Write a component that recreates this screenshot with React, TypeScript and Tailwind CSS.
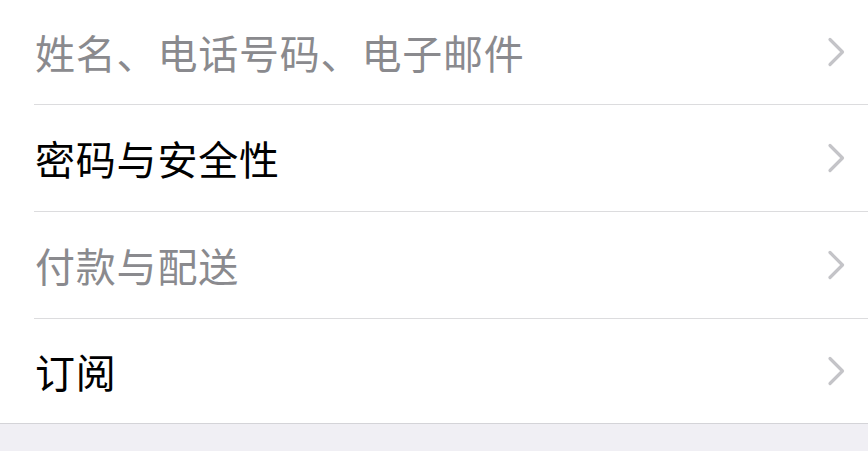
import React from 'react';

type Row = { label: string; muted: boolean };

const rows: Row[] = [
  { label: '姓名、电话号码、电子邮件', muted: true },
  { label: '密码与安全性', muted: false },
  { label: '付款与配送', muted: true },
  { label: '订阅', muted: false },
];

// row heights incl. the 1px divider
const heights = ['h-[105px]', 'h-[107px]', 'h-[107px]', 'h-[104px]'];

const Chevron = () => (
  <svg width="19" height="30" viewBox="0 0 19 30" fill="none" className="shrink-0">
    <path d="M3 2.5 L15.5 15 L3 27.5" stroke="#c4c4c8" strokeWidth="3.2" strokeLinecap="round" strokeLinejoin="round" />
  </svg>
);

const App: React.FC = () => {
  return (
    <div
      className="w-[868px] h-[451px] bg-[#f0eff4] overflow-hidden"
      style={{ fontFamily: '"Noto Sans CJK SC", "Noto Sans", sans-serif' }}
    >
      <div className="bg-white border-b border-[#d4d4d8]">
        {rows.map((row, i) => (
          <div key={row.label} className="pl-[34px]">
            <div
              className={`flex items-center justify-between pr-[22px] ${heights[i]} ${
                i < rows.length - 1 ? 'border-b border-[#dcdcde]' : ''
              }`}
            >
              <span
                className={`text-[40px] leading-none tracking-[0.8px] pl-[1px] ${
                  row.muted ? 'text-[#8a8a8e]' : 'text-black'
                }`}
              >
                {row.label}
              </span>
              <Chevron />
            </div>
          </div>
        ))}
      </div>
    </div>
  );
};

export default App;
